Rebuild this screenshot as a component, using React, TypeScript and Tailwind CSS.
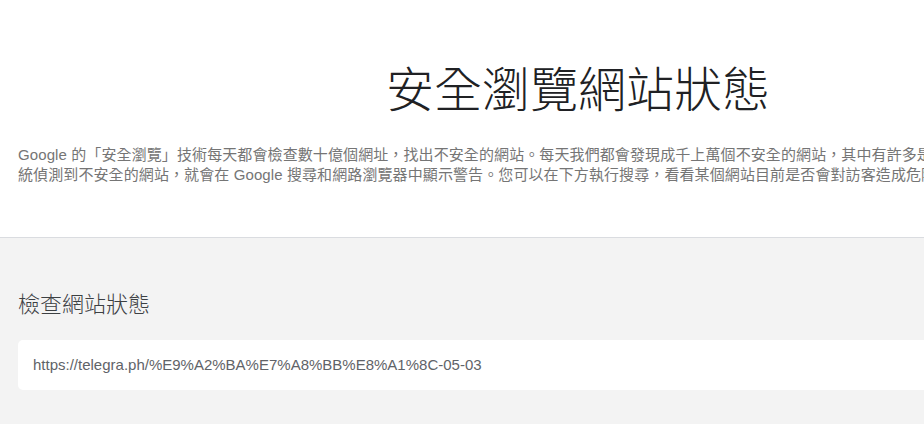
import React from "react";

const cjk = '"Liberation Sans", "Noto Sans CJK TC", sans-serif';

export default function App() {
  return (
    <div lang="zh-TW" className="w-[924px] h-[430px] overflow-hidden bg-white">
      <div className="w-[1156px]" style={{ fontFamily: cjk }}>
        <header className="pt-[63px] pb-[52px] px-[18px] border-b border-[#dadce0]">
          <h1 className="text-center text-[48px] leading-[56px] font-light text-[#202124]">
            安全瀏覽網站狀態
          </h1>
          <p className="mt-[26px] text-[15px] leading-[20px] tracking-[0.1px] text-[#757575] whitespace-nowrap">
            Google 的「安全瀏覽」技術每天都會檢查數十億個網址，找出不安全的網站。每天我們都會發現成千上萬個不安全的網站，其中有許多是遭到入侵的正當網站。當我們系
            <br />
            統偵測到不安全的網站，就會在 Google 搜尋和網路瀏覽器中顯示警告。您可以在下方執行搜尋，看看某個網站目前是否會對訪客造成危險。
          </p>
        </header>
        <section className="bg-[#f3f3f3] pt-[53px] pb-[34px] px-[18px]">
          <h2 className="text-[22px] leading-[28px] font-light text-[#3c4043]">檢查網站狀態</h2>
          <div className="mt-[21px] h-[50px] bg-white rounded-[5px] flex items-center px-[15px]">
            <span className="text-[15px] text-[#5f6368]">
              https://telegra.ph/%E9%A2%BA%E7%A8%BB%E8%A1%8C-05-03
            </span>
          </div>
        </section>
      </div>
    </div>
  );
}
